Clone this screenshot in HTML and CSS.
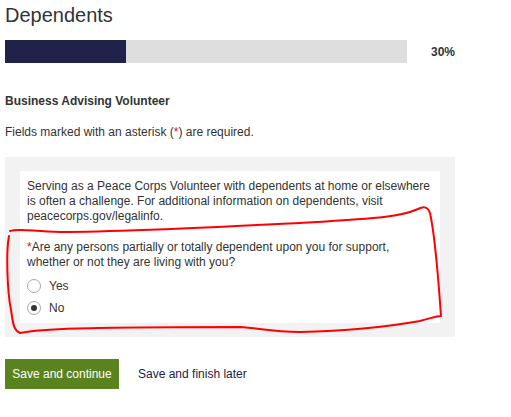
FILE: index.html
```html
<!DOCTYPE html>
<html>
<head>
<meta charset="utf-8">
<link rel="stylesheet" href="styles.css">
</head>
<body>
<div class="page">
  <h1 class="title">Dependents</h1>
  <div class="progress-row">
    <div class="track"><div class="fill" style="width:30%"></div></div>
    <div class="pct">30%</div>
  </div>
  <div class="role">Business Advising Volunteer</div>
  <p class="note">Fields marked with an asterisk (<span class="req">*</span>) are required.</p>
  <div class="panel">
    <div class="card">
      <p class="intro">Serving as a Peace Corps Volunteer with dependents at home or elsewhere is often a challenge. For additional information on dependents, visit peacecorps.gov/legalinfo.</p>
      <p class="question"><span class="req">*</span>Are any persons partially or totally dependent upon you for support, whether or not they are living with you?</p>
      <label class="option"><span class="radio"></span>Yes</label>
      <label class="option"><span class="radio checked"></span>No</label>
    </div>
  </div>
  <div class="actions">
    <button class="btn">Save and continue</button>
    <a class="later">Save and finish later</a>
  </div>
  <svg class="scribble" width="511" height="417" viewBox="0 0 511 417">
    <path d="M9,236 C6,250 7,290 11,310 C13,322 13,330 20,333 C40,329 80,327 240,327 C258,328 272,332 300,332 C340,331 380,328 420,321 C432,318 436,316 441,316 C439,290 436,240 430,213 C428,207 424,206 418,209 C400,217 380,218 300,223 C200,228 100,232 60,232 C30,231 18,228 10,231" fill="none" stroke="#ff0000" stroke-width="2" stroke-linecap="round" stroke-linejoin="round"/>
  </svg>
</div>
</body>
</html>
```
FILE: styles.css
```css
html, body {
  margin: 0;
  padding: 0;
  background: #fff;
}
body {
  font-family: "Liberation Sans", Arial, sans-serif;
  color: #333;
  font-size: 12px;
}
.page {
  position: relative;
  width: 511px;
  height: 417px;
  padding: 0 5px;
  box-sizing: border-box;
}
.title {
  margin: 0;
  padding-top: 3px;
  font-size: 20px;
  font-weight: normal;
  line-height: 24px;
  color: #333;
}
.progress-row {
  display: flex;
  align-items: center;
  margin-top: 13px;
}
.track {
  width: 402px;
  height: 23px;
  background: #dedede;
}
.fill {
  height: 100%;
  background: #21224a;
}
.pct {
  margin-left: 24px;
  font-weight: bold;
  font-size: 12px;
}
.role {
  margin-top: 31px;
  font-weight: bold;
  font-size: 12px;
  line-height: 15px;
}
.note {
  margin: 16px 0 0;
  line-height: 15px;
}
.req {
  color: #c8102e;
}
.panel {
  margin-top: 17px;
  width: 450px;
  background: #f2f2f2;
  padding: 14px 15px;
  box-sizing: border-box;
}
.card {
  background: #fff;
  padding: 8px 7px 4px;
}
.intro, .question {
  margin: 0;
  line-height: 15px;
}
.question {
  margin-top: 16px;
  margin-bottom: 5px;
}
.option {
  display: flex;
  align-items: center;
  height: 22px;
  font-size: 12px;
}
.radio {
  width: 14px;
  height: 14px;
  border: 1.5px solid #a9a9a9;
  border-radius: 50%;
  box-sizing: border-box;
  margin-right: 8px;
  margin-left: 0;
  display: flex;
  align-items: center;
  justify-content: center;
  background: #fff;
}
.radio.checked::after {
  content: "";
  width: 6px;
  height: 6px;
  border-radius: 50%;
  background: #333;
}
.actions {
  display: flex;
  align-items: center;
  margin-top: 22px;
}
.btn {
  font-family: inherit;
  font-size: 12px;
  color: #fff;
  background: #5a821e;
  border: none;
  width: 114px;
  height: 30px;
  padding: 0;
}
.later {
  margin-left: 19px;
  color: #1f2044;
  font-size: 12px;
}
.scribble {
  position: absolute;
  left: 0;
  top: 0;
  pointer-events: none;
}
```
